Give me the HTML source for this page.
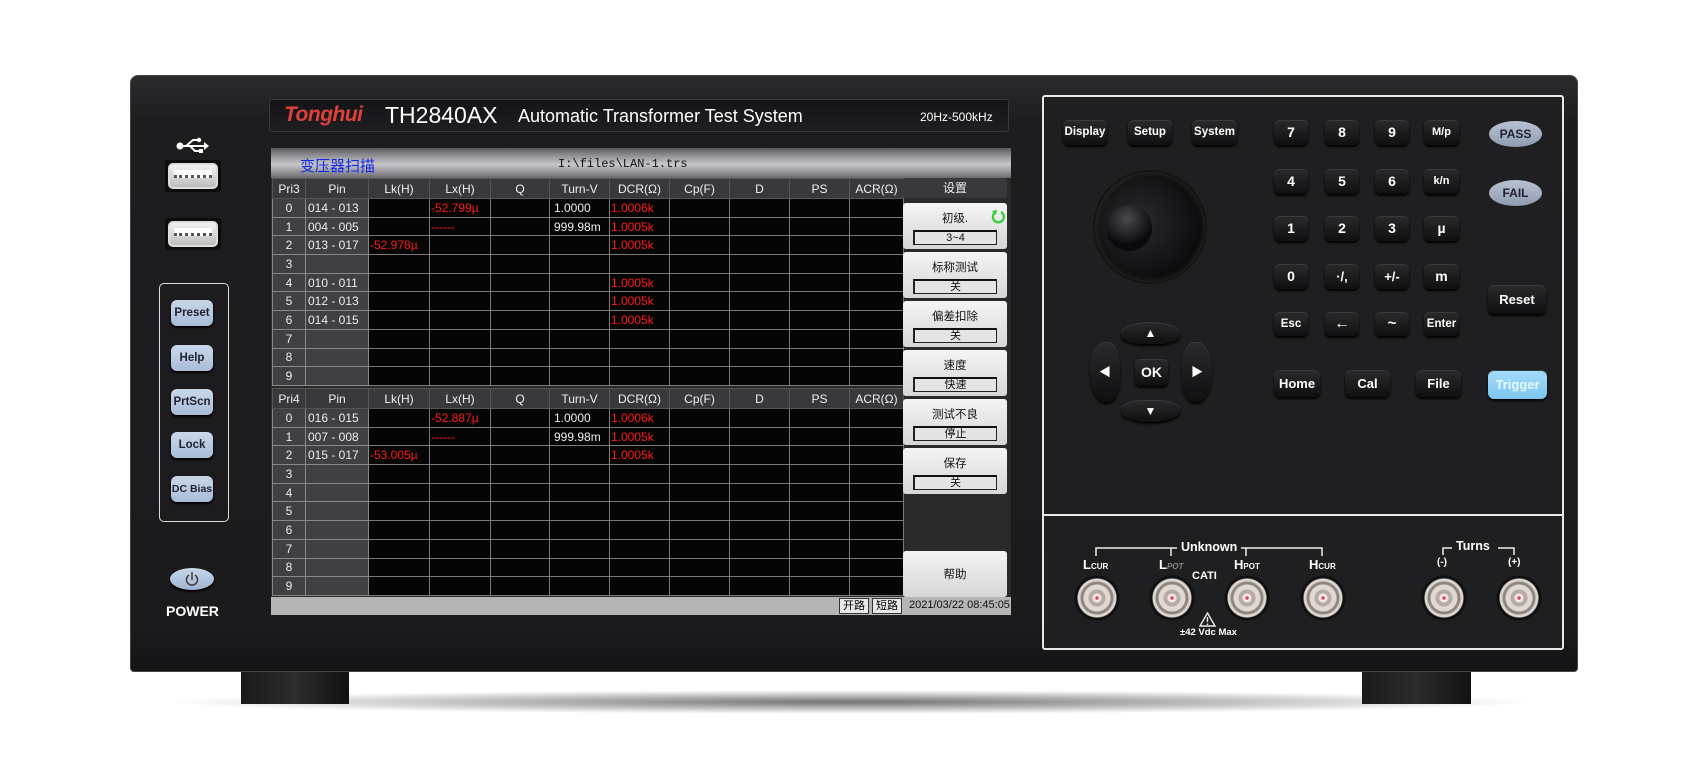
<!DOCTYPE html>
<html><head><meta charset="utf-8">
<style>
*{margin:0;padding:0;box-sizing:border-box}
body{width:1701px;height:761px;background:#fff;position:relative;overflow:hidden;font-family:"Liberation Sans","Noto Sans CJK SC",sans-serif}
.a{position:absolute}
.body{left:130px;top:75px;width:1448px;height:597px;background:linear-gradient(#2a2a2d,#1d1d20 8%,#1b1b1e 92%,#141416);border-radius:8px 8px 4px 4px;border:1px solid #444}
.foot{background:linear-gradient(90deg,#1a1a1a,#2c2c2c 50%,#111);top:672px;height:32px}
.shadow{left:160px;top:690px;width:1380px;height:24px;background:radial-gradient(ellipse at center,rgba(0,0,0,.55),rgba(0,0,0,0) 70%)}
.title{left:269px;top:99px;width:740px;height:33px;background:linear-gradient(#141417,#1f1f23);border:1px solid #3a3a3e;border-radius:3px;color:#fff}
.screen{left:271px;top:148px;width:740px;height:467px;background:#2a2a2a}
.hdr{left:271px;top:148px;width:740px;height:30px;background:linear-gradient(#5a5a5e,#9a9a9e 30%,#c8c8cc 55%,#6a6a6e);}
table{border-collapse:collapse;position:absolute;table-layout:fixed;font-family:"Liberation Sans Narrow","Liberation Sans",sans-serif;font-size:12px}
td{border:1px solid #7a7a7a;text-align:center;color:#eee;background:#050505;height:18.7px;padding:0;white-space:nowrap;overflow:hidden}
tr.h td{background:#38383d;height:20px;border-color:#555;color:#f0f0f0}
td.i{background:#3f3f44;border-color:#888}
td.p{background:#3f3f44;border-color:#888;text-align:left;padding-left:2px}
td.r{color:#ff1a1a;text-align:left;padding-left:1px}
td.w{text-align:left;padding-left:4px}
.sb{left:903px;width:104px;height:46px;background:linear-gradient(#f4f4f4,#d6d6d6);border-radius:3px;font-size:11.5px;text-align:center;color:#111}
.sb .t{position:absolute;left:0;right:0;top:7px}
.sb .v{position:absolute;left:10px;right:10px;top:27px;height:15px;border:1px solid #222;border-top-color:#111;border-left-width:2px;border-top-width:2px;background:#e4e4e4;font-size:11px;line-height:12px}
.lb{left:171px;width:42px;height:26px;border-radius:6px;background:linear-gradient(#c9d7ea,#a9bdd7);color:#223;font-size:11.5px;font-weight:bold;text-align:center;line-height:26px;box-shadow:0 2px 2px #000}
.k{background:linear-gradient(#2a2a2c,#101012);border-radius:6px;color:#fff;font-weight:bold;font-size:13px;text-align:center;box-shadow:0 2px 2px #000,inset 0 1px 0 #3a3a3c}
.c{border-radius:50%;background:radial-gradient(circle,#d46 0 1.5px,#f3e9e4 2px 4px,#b7aaa4 5px 8px,#e0d8d2 9px 13px,#8d8580 14px 16px,#dcd6d0 17px 19px,#101010 20px 22px,transparent 23px)}
.lbl{color:#fff;font-weight:bold;font-size:12px}
</style></head><body>
<div class="a shadow"></div>
<div class="a foot" style="left:241px;width:108px"></div>
<div class="a foot" style="left:1362px;width:109px"></div>
<div class="a body"></div>

<!-- title bar -->
<div class="a title">
 <div class="a" style="left:14px;top:3px;color:#e0403a;font-style:italic;font-weight:bold;font-size:21px;font-family:'Liberation Sans Narrow','Liberation Sans',sans-serif;letter-spacing:-0.5px">Tonghui</div>
 <div class="a" style="left:115px;top:2px;font-size:23px">TH2840AX</div>
 <div class="a" style="left:248px;top:6px;font-size:18px">Automatic Transformer Test System</div>
 <div class="a" style="left:650px;top:10px;font-size:12px">20Hz-500kHz</div>
</div>

<!-- left -->
<svg class="a" style="left:176px;top:137px" width="34" height="18" viewBox="0 0 34 18"><circle cx="4" cy="9" r="3.5" fill="#fff"/><path d="M4 9H28M10 9L17 3H22M14 9L19 14H24" stroke="#fff" stroke-width="2" fill="none"/><path d="M28 5L33 9L28 13Z" fill="#fff"/><circle cx="23" cy="3" r="2.2" fill="#fff"/><rect x="23" y="12" width="4" height="4" fill="#fff"/></svg>
<div class="a" style="left:165px;top:160px;width:56px;height:32px;background:#0c0c0c;border-radius:3px"></div>
<div class="a" style="left:168px;top:163px;width:50px;height:26px;background:linear-gradient(#f2f2f2,#bdbdbd);border-radius:5px;border:2px solid #ddd"><div style="margin:5px 4px;height:8px;background:#fff;border-bottom:3px dotted #555"></div></div>
<div class="a" style="left:165px;top:218px;width:56px;height:32px;background:#0c0c0c;border-radius:3px"></div>
<div class="a" style="left:168px;top:221px;width:50px;height:26px;background:linear-gradient(#f2f2f2,#bdbdbd);border-radius:5px;border:2px solid #ddd"><div style="margin:5px 4px;height:8px;background:#fff;border-bottom:3px dotted #555"></div></div>
<div class="a" style="left:159px;top:283px;width:70px;height:239px;border:1.5px solid #ddd;border-radius:5px"></div>
<div class="a lb" style="top:300px">Preset</div>
<div class="a lb" style="top:345px">Help</div>
<div class="a lb" style="top:389px">PrtScn</div>
<div class="a lb" style="top:432px">Lock</div>
<div class="a lb" style="top:476px;font-size:10.5px">DC Bias</div>
<div class="a" style="left:170px;top:568px;width:44px;height:22px;border-radius:50%;background:linear-gradient(#c9d7ea,#9fb3cf);box-shadow:0 2px 2px #000"></div>
<svg class="a" style="left:184px;top:570px" width="16" height="18"><path d="M5 5A5.5 5.5 0 1 0 11 5" stroke="#333" stroke-width="1.4" fill="none"/><path d="M8 2V10" stroke="#333" stroke-width="1.4"/></svg>
<div class="a" style="left:166px;top:603px;color:#fff;font-weight:bold;font-size:14px">POWER</div>

<!-- screen -->
<div class="a screen"></div>
<div class="a hdr"></div>
<div class="a" style="left:300px;top:155px;color:#1428e8;font-size:15px;font-family:'Noto Sans CJK SC',sans-serif">变压器扫描</div>
<div class="a" style="left:558px;top:157px;color:#111;font-size:12px;font-family:'Liberation Mono',monospace">I:\files\LAN-1.trs</div>

<table style="left:272px;top:178px;width:631px">
<colgroup><col style="width:33px"><col style="width:63px"><col style="width:61px"><col style="width:61px"><col style="width:59px"><col style="width:60px"><col style="width:60px"><col style="width:60px"><col style="width:60px"><col style="width:60px"><col style="width:54px"></colgroup>
<tr class="h"><td>Pri3</td><td>Pin</td><td>Lk(H)</td><td>Lx(H)</td><td>Q</td><td>Turn-V</td><td>DCR(Ω)</td><td>Cp(F)</td><td>D</td><td>PS</td><td>ACR(Ω)</td></tr>
<tr><td class="i">0</td><td class="p">014 - 013</td><td></td><td class="r">-52.799µ</td><td></td><td class="w">1.0000</td><td class="r">1.0006k</td><td></td><td></td><td></td><td></td></tr>
<tr><td class="i">1</td><td class="p">004 - 005</td><td></td><td class="r">------</td><td></td><td class="w">999.98m</td><td class="r">1.0005k</td><td></td><td></td><td></td><td></td></tr>
<tr><td class="i">2</td><td class="p">013 - 017</td><td class="r">-52.978µ</td><td></td><td></td><td></td><td class="r">1.0005k</td><td></td><td></td><td></td><td></td></tr>
<tr><td class="i">3</td><td class="p"></td><td></td><td></td><td></td><td></td><td></td><td></td><td></td><td></td><td></td></tr>
<tr><td class="i">4</td><td class="p">010 - 011</td><td></td><td></td><td></td><td></td><td class="r">1.0005k</td><td></td><td></td><td></td><td></td></tr>
<tr><td class="i">5</td><td class="p">012 - 013</td><td></td><td></td><td></td><td></td><td class="r">1.0005k</td><td></td><td></td><td></td><td></td></tr>
<tr><td class="i">6</td><td class="p">014 - 015</td><td></td><td></td><td></td><td></td><td class="r">1.0005k</td><td></td><td></td><td></td><td></td></tr>
<tr><td class="i">7</td><td class="p"></td><td></td><td></td><td></td><td></td><td></td><td></td><td></td><td></td><td></td></tr>
<tr><td class="i">8</td><td class="p"></td><td></td><td></td><td></td><td></td><td></td><td></td><td></td><td></td><td></td></tr>
<tr><td class="i">9</td><td class="p"></td><td></td><td></td><td></td><td></td><td></td><td></td><td></td><td></td><td></td></tr>
</table>

<table style="left:272px;top:388px;width:631px">
<colgroup><col style="width:33px"><col style="width:63px"><col style="width:61px"><col style="width:61px"><col style="width:59px"><col style="width:60px"><col style="width:60px"><col style="width:60px"><col style="width:60px"><col style="width:60px"><col style="width:54px"></colgroup>
<tr class="h"><td>Pri4</td><td>Pin</td><td>Lk(H)</td><td>Lx(H)</td><td>Q</td><td>Turn-V</td><td>DCR(Ω)</td><td>Cp(F)</td><td>D</td><td>PS</td><td>ACR(Ω)</td></tr>
<tr><td class="i">0</td><td class="p">016 - 015</td><td></td><td class="r">-52.887µ</td><td></td><td class="w">1.0000</td><td class="r">1.0006k</td><td></td><td></td><td></td><td></td></tr>
<tr><td class="i">1</td><td class="p">007 - 008</td><td></td><td class="r">------</td><td></td><td class="w">999.98m</td><td class="r">1.0005k</td><td></td><td></td><td></td><td></td></tr>
<tr><td class="i">2</td><td class="p">015 - 017</td><td class="r">-53.005µ</td><td></td><td></td><td></td><td class="r">1.0005k</td><td></td><td></td><td></td><td></td></tr>
<tr><td class="i">3</td><td class="p"></td><td></td><td></td><td></td><td></td><td></td><td></td><td></td><td></td><td></td></tr>
<tr><td class="i">4</td><td class="p"></td><td></td><td></td><td></td><td></td><td></td><td></td><td></td><td></td><td></td></tr>
<tr><td class="i">5</td><td class="p"></td><td></td><td></td><td></td><td></td><td></td><td></td><td></td><td></td><td></td></tr>
<tr><td class="i">6</td><td class="p"></td><td></td><td></td><td></td><td></td><td></td><td></td><td></td><td></td><td></td></tr>
<tr><td class="i">7</td><td class="p"></td><td></td><td></td><td></td><td></td><td></td><td></td><td></td><td></td><td></td></tr>
<tr><td class="i">8</td><td class="p"></td><td></td><td></td><td></td><td></td><td></td><td></td><td></td><td></td><td></td></tr>
<tr><td class="i">9</td><td class="p"></td><td></td><td></td><td></td><td></td><td></td><td></td><td></td><td></td><td></td></tr>
</table>

<!-- side softkeys -->
<div class="a" style="left:903px;top:178px;width:104px;height:20px;background:#38383d;border-radius:3px;color:#eee;font-size:12px;text-align:center;line-height:20px">设置</div>
<div class="a sb" style="top:203px"><div class="t">初级.</div><div class="v">3~4</div>
<svg class="a" style="left:88px;top:6px" width="15" height="15"><path d="M4 3.5A5.5 5.5 0 1 0 10 3" stroke="#2ed12e" stroke-width="2.2" fill="none"/><path d="M1 2L6 1L5 6Z" fill="#2ed12e"/></svg></div>
<div class="a sb" style="top:252px"><div class="t">标称测试</div><div class="v">关</div></div>
<div class="a sb" style="top:301px"><div class="t">偏差扣除</div><div class="v">关</div></div>
<div class="a sb" style="top:350px"><div class="t">速度</div><div class="v">快速</div></div>
<div class="a sb" style="top:399px"><div class="t">测试不良</div><div class="v">停止</div></div>
<div class="a sb" style="top:448px"><div class="t">保存</div><div class="v">关</div></div>
<div class="a sb" style="top:551px;height:46px"><div class="t" style="top:15px">帮助</div></div>
<!-- status bar -->
<div class="a" style="left:271px;top:597px;width:740px;height:18px;background:#b5b5b5"></div>
<div class="a" style="left:839px;top:598px;width:30px;height:16px;background:#e8e8e8;border:1px solid #333;font-size:11px;text-align:center;line-height:14px">开路</div>
<div class="a" style="left:872px;top:598px;width:30px;height:16px;background:#e8e8e8;border:1px solid #333;font-size:11px;text-align:center;line-height:14px">短路</div>
<div class="a" style="left:909px;top:599px;font-size:11px;color:#111;font-family:'Liberation Sans Narrow','Liberation Sans',sans-serif">2021/03/22 08:45:05</div>

<!-- right panel -->
<div class="a" style="left:1042px;top:95px;width:522px;height:555px;border:2px solid #e8e8e8;border-radius:3px;background:#1f1f22"></div>
<div class="a" style="left:1044px;top:514px;width:518px;height:2px;background:#e8e8e8"></div>
<div class="a k" style="left:1063px;top:120px;width:44px;height:25px;line-height:25px;font-size:11.5px">Display</div>
<div class="a k" style="left:1128px;top:120px;width:44px;height:25px;line-height:25px;font-size:11.5px">Setup</div>
<div class="a k" style="left:1192px;top:120px;width:45px;height:25px;line-height:25px;font-size:11.5px">System</div>

<div class="a k" style="left:1274px;top:120px;width:34px;height:25px;line-height:25px;font-size:14px">7</div>
<div class="a k" style="left:1325px;top:120px;width:34px;height:25px;line-height:25px;font-size:14px">8</div>
<div class="a k" style="left:1375px;top:120px;width:34px;height:25px;line-height:25px;font-size:14px">9</div>
<div class="a k" style="left:1424px;top:120px;width:35px;height:25px;line-height:25px;font-size:11px">M/p</div>
<div class="a k" style="left:1274px;top:169px;width:34px;height:25px;line-height:25px;font-size:14px">4</div>
<div class="a k" style="left:1325px;top:169px;width:34px;height:25px;line-height:25px;font-size:14px">5</div>
<div class="a k" style="left:1375px;top:169px;width:34px;height:25px;line-height:25px;font-size:14px">6</div>
<div class="a k" style="left:1424px;top:169px;width:35px;height:25px;line-height:25px;font-size:11px">k/n</div>
<div class="a k" style="left:1274px;top:216px;width:34px;height:25px;line-height:25px;font-size:14px">1</div>
<div class="a k" style="left:1325px;top:216px;width:34px;height:25px;line-height:25px;font-size:14px">2</div>
<div class="a k" style="left:1375px;top:216px;width:34px;height:25px;line-height:25px;font-size:14px">3</div>
<div class="a k" style="left:1424px;top:216px;width:35px;height:25px;line-height:25px;font-size:14px">µ</div>
<div class="a k" style="left:1274px;top:264px;width:34px;height:25px;line-height:25px;font-size:14px">0</div>
<div class="a k" style="left:1325px;top:264px;width:34px;height:25px;line-height:25px;font-size:13px">·/,</div>
<div class="a k" style="left:1375px;top:264px;width:34px;height:25px;line-height:25px;font-size:13px">+/-</div>
<div class="a k" style="left:1424px;top:264px;width:35px;height:25px;line-height:25px;font-size:14px">m</div>
<div class="a k" style="left:1274px;top:312px;width:34px;height:24px;line-height:24px;font-size:11.5px">Esc</div>
<div class="a k" style="left:1325px;top:312px;width:34px;height:24px;line-height:24px;font-size:16px">&#8592;</div>
<div class="a k" style="left:1375px;top:312px;width:34px;height:24px;line-height:24px;font-size:15px">~</div>
<div class="a k" style="left:1424px;top:312px;width:35px;height:24px;line-height:24px;font-size:11.5px">Enter</div>
<div class="a k" style="left:1274px;top:370px;width:46px;height:27px;line-height:27px">Home</div>
<div class="a k" style="left:1345px;top:370px;width:45px;height:27px;line-height:27px">Cal</div>
<div class="a k" style="left:1416px;top:370px;width:45px;height:27px;line-height:27px">File</div>
<div class="a k" style="left:1488px;top:370px;width:59px;height:29px;line-height:29px;background:linear-gradient(#a4dcfa,#7cc6f0);color:#e8f6ff">Trigger</div>
<div class="a k" style="left:1488px;top:285px;width:58px;height:29px;line-height:29px">Reset</div>
<div class="a" style="left:1489px;top:121px;width:53px;height:26px;border-radius:50%;background:linear-gradient(#b7c3d3,#8f9cb0);color:#223;font-weight:bold;font-size:12px;text-align:center;line-height:26px">PASS</div>
<div class="a" style="left:1489px;top:180px;width:53px;height:26px;border-radius:50%;background:linear-gradient(#b7c3d3,#8f9cb0);color:#223;font-weight:bold;font-size:12px;text-align:center;line-height:26px">FAIL</div>

<!-- knob -->
<div class="a" style="left:1095px;top:172px;width:110px;height:110px;border-radius:50%;background:radial-gradient(circle at 40% 45%,#2a2a2c,#0c0c0e 70%);box-shadow:0 0 0 2px #141416,inset 0 0 6px #333"></div>
<div class="a" style="left:1106px;top:205px;width:46px;height:46px;border-radius:50%;background:radial-gradient(circle at 45% 30%,#4a4a4e,#0a0a0c 65%)"></div>

<!-- dpad -->
<div class="a k" style="left:1121px;top:322px;width:59px;height:22px;border-radius:50% 50% 40% 40%;font-size:12px;line-height:22px">▲</div>
<div class="a k" style="left:1121px;top:400px;width:59px;height:22px;border-radius:40% 40% 50% 50%;font-size:12px;line-height:22px">▼</div>
<div class="a k" style="left:1090px;top:342px;width:30px;height:60px;border-radius:50% 40% 40% 50%;font-size:12px;line-height:60px">◀</div>
<div class="a k" style="left:1182px;top:342px;width:30px;height:60px;border-radius:40% 50% 50% 40%;font-size:12px;line-height:60px">▶</div>
<div class="a k" style="left:1135px;top:359px;width:33px;height:27px;line-height:27px;font-size:14px">OK</div>

<!-- connectors -->
<svg class="a" style="left:1044px;top:535px" width="520" height="40">
 <g stroke="#eee" stroke-width="1.5" fill="none">
 <path d="M52 21V13H133M197 13H278V21M127 13V21M202 13V21"/>
 <path d="M399 20V13H408M454 13H470V20"/>
 </g></svg>
<div class="a lbl" style="left:1181px;top:540px;font-size:12.5px">Unknown</div>
<div class="a lbl" style="left:1456px;top:539px;font-size:12.5px">Turns</div>
<div class="a lbl" style="left:1083px;top:557px;font-size:13px">L<span style="font-size:8px">CUR</span></div>
<div class="a lbl" style="left:1159px;top:557px;font-size:13px">L<span style="font-size:8px;color:#888;font-style:italic">POT</span></div>
<div class="a lbl" style="left:1234px;top:557px;font-size:13px">H<span style="font-size:8px">POT</span></div>
<div class="a lbl" style="left:1309px;top:557px;font-size:13px">H<span style="font-size:8px">CUR</span></div>
<div class="a lbl" style="left:1192px;top:570px;font-size:11px">CATI</div>
<div class="a lbl" style="left:1437px;top:557px;font-size:10px">(-)</div>
<div class="a lbl" style="left:1508px;top:557px;font-size:10px">(+)</div>
<div class="a c" style="left:1074px;top:575px;width:46px;height:46px"></div>
<div class="a c" style="left:1149px;top:575px;width:46px;height:46px"></div>
<div class="a c" style="left:1224px;top:575px;width:46px;height:46px"></div>
<div class="a c" style="left:1300px;top:575px;width:46px;height:46px"></div>
<div class="a c" style="left:1421px;top:575px;width:46px;height:46px"></div>
<div class="a c" style="left:1496px;top:575px;width:46px;height:46px"></div>
<svg class="a" style="left:1199px;top:612px" width="17" height="15"><path d="M8.5 1L16 14H1Z" stroke="#eee" stroke-width="1.4" fill="none"/><path d="M8.5 5V10M8.5 11.5V13" stroke="#eee" stroke-width="1.4"/></svg>
<div class="a lbl" style="left:1180px;top:627px;font-size:9.5px">±42 Vdc Max</div>
</body></html>
